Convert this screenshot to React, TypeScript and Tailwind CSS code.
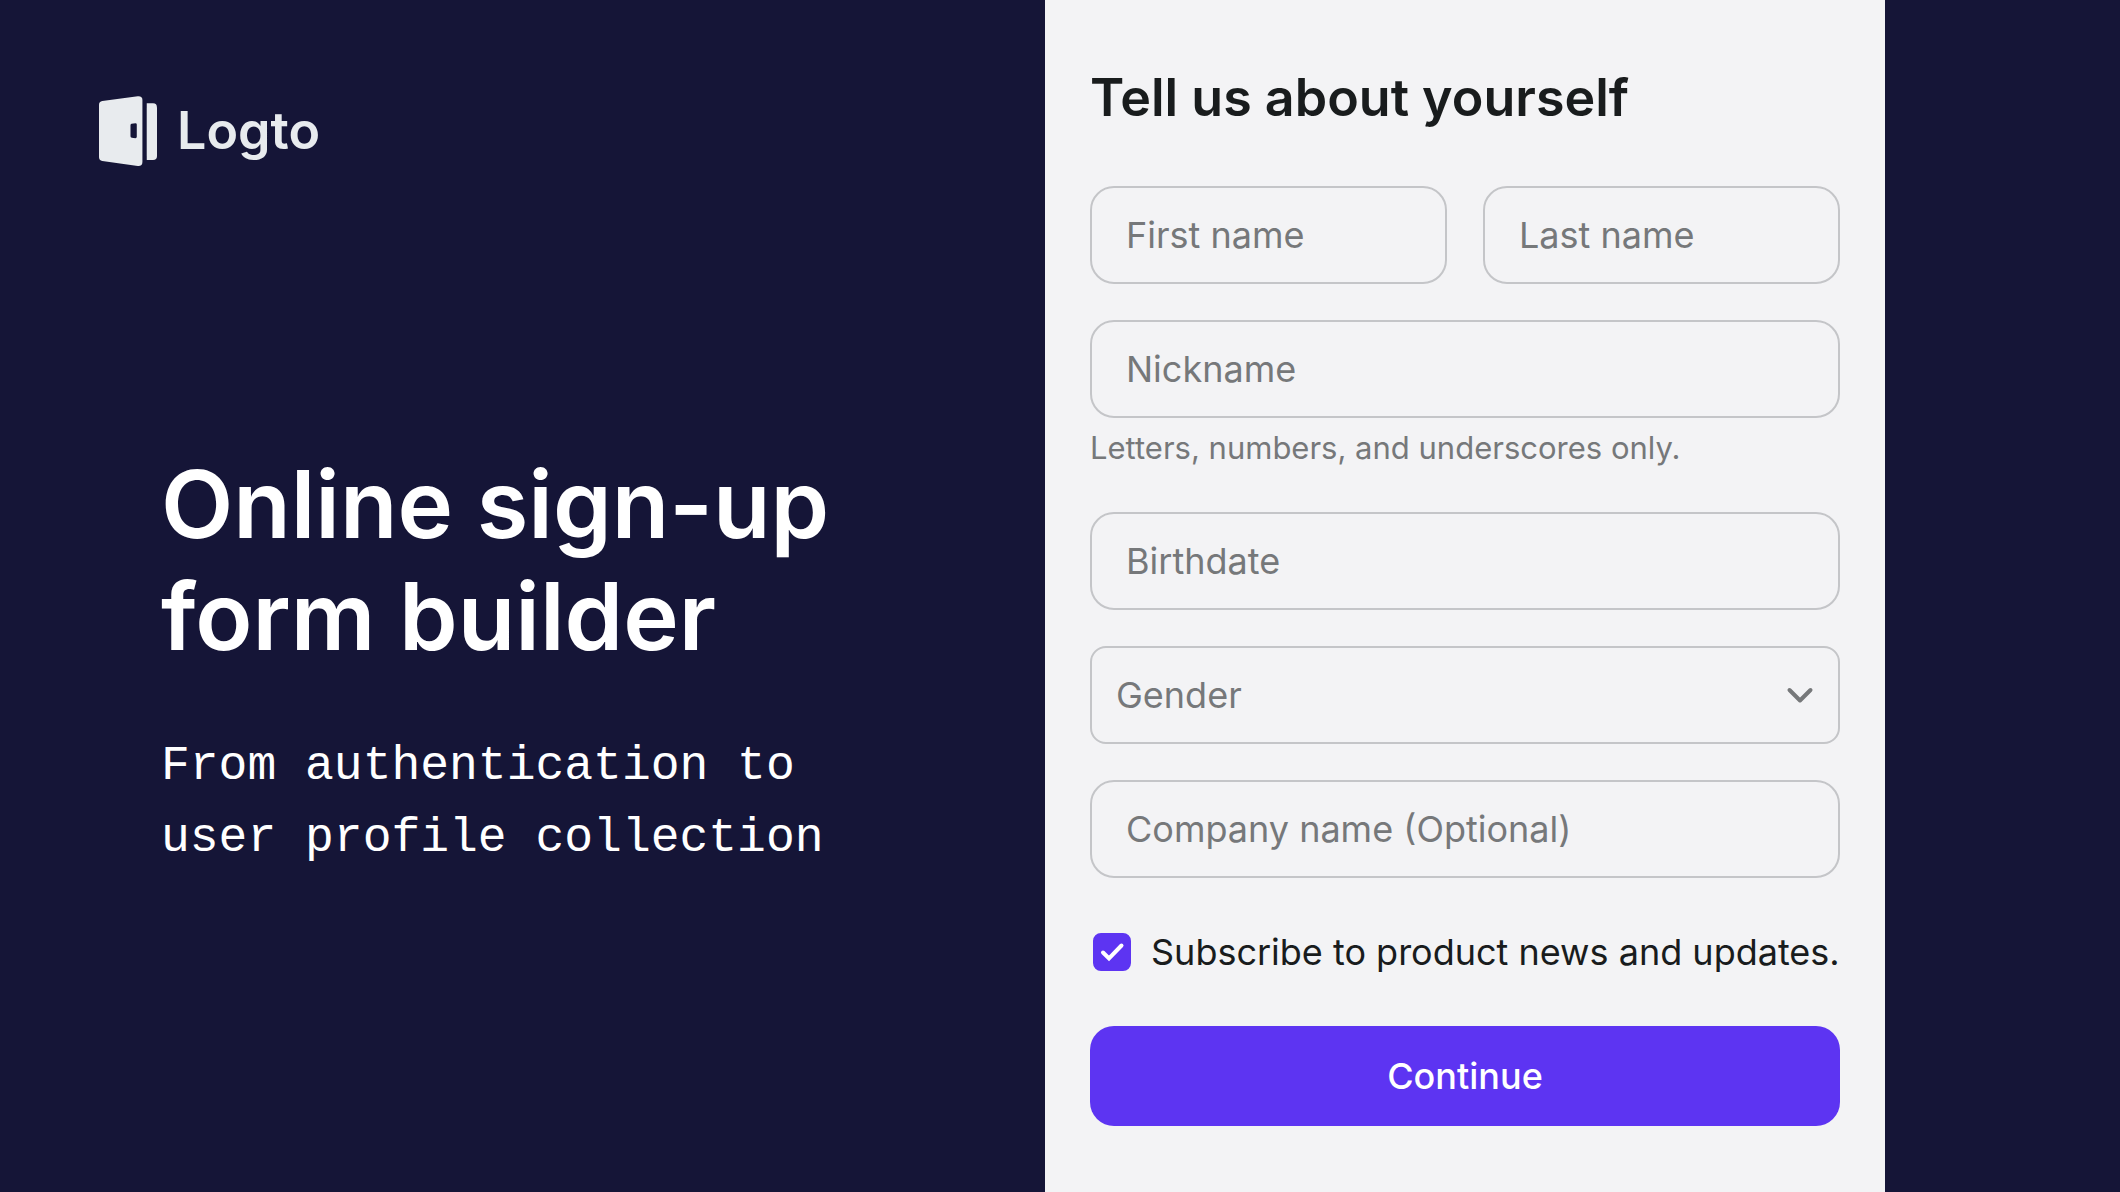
import { useState } from "react";

interface TextFieldProps {
  id: string;
  label: string;
  hint?: string;
}

const LogtoMark = () => (
  <svg
    viewBox="0 0 175 211"
    className="h-[70px] w-[58px] fill-[#e8ebee]"
    aria-hidden="true"
  >
    <path
      fillRule="evenodd"
      d="M10 15 L117 1 Q131 0 131 12 V199 Q131 212 117 211 L10 196 Q0 194 0 185 V26 Q0 17 10 15 Z M98 84 Q95 85 95 89 V121 Q95 125 99 126 L110 127 Q114 127 114 123 V86 Q114 82 110 82 Z"
    />
    <path d="M144 22 H163 Q175 22 175 35 V181 Q175 193 163 193 H144 Z" />
  </svg>
);

const TextField = ({ id, label, hint }: TextFieldProps) => {
  return (
    <div className="min-w-0">
      <input
        id={id}
        type="text"
        aria-label={label}
        aria-describedby={hint ? `${id}-hint` : undefined}
        placeholder={label}
        className="block h-[98px] w-full rounded-3xl border-2 border-[#c4c5c8] bg-transparent px-[34px] text-[36px] text-[#191c1d] placeholder:text-[#76787a] placeholder:opacity-100 focus:border-[#5d34f2] focus:outline-none"
      />
      {hint && (
        <p
          id={`${id}-hint`}
          className="pt-1.5 pb-1 text-[31px] leading-[48px] text-[#76787a]"
        >
          {hint}
        </p>
      )}
    </div>
  );
};

export default function App() {
  const [subscribed, setSubscribed] = useState(true);
  const [gender, setGender] = useState("");

  return (
    <div className="grid min-h-screen grid-cols-[1045fr_840fr_235fr] bg-[#151537] font-['Inter',sans-serif]">
      <section className="pt-24 pl-[99px]">
        <div className="flex items-center gap-5 text-[52px] leading-[70px] font-semibold text-[#e8ebee]">
          <LogtoMark />
          Logto
        </div>

        <div className="mt-[282px] pl-[62px] text-white">
          <h1 className="text-[94px] leading-[112px] font-semibold">
            Online sign-up
            <br />
            form builder
          </h1>
          <p className="mt-[58px] font-['Liberation_Mono',monospace] text-[48px] leading-[72px]">
            From authentication to
            <br />
            user profile collection
          </p>
        </div>
      </section>

      <main className="bg-[#f3f3f5] px-[45px] pt-[66px]">
        <h2 className="text-[52px] leading-[64px] font-semibold text-[#191c1d]">
          Tell us about yourself
        </h2>

        <form
          onSubmit={(e) => e.preventDefault()}
          className="mt-14 flex flex-col gap-9"
        >
          <div className="grid grid-cols-2 gap-9">
            <TextField id="first-name" label="First name" />
            <TextField id="last-name" label="Last name" />
          </div>
          <TextField
            id="nickname"
            label="Nickname"
            hint="Letters, numbers, and underscores only."
          />
          <TextField id="birthdate" label="Birthdate" />

          <div className="relative">
            <select
              id="gender"
              aria-label="Gender"
              value={gender}
              onChange={(e) => setGender(e.target.value)}
              className="block h-[98px] w-full appearance-none rounded-2xl border-2 border-[#c4c5c8] bg-transparent px-6 text-[36px] text-[#76787a] focus:border-[#5d34f2] focus:outline-none"
            >
              <option value="">Gender</option>
              <option value="female">Female</option>
              <option value="male">Male</option>
              <option value="other">Prefer not to say</option>
            </select>
            <svg
              viewBox="0 0 48 48"
              className="pointer-events-none absolute inset-y-0 right-4 my-auto size-12 fill-none stroke-[#76787a] stroke-4"
              strokeLinecap="round"
              strokeLinejoin="round"
              aria-hidden="true"
            >
              <path d="M13.5 19 L24 29.5 L34.5 19" />
            </svg>
          </div>

          <TextField id="company" label="Company name (Optional)" />

          <div className="mt-3.5 flex items-center gap-5 pl-[3px]">
            <span className="relative size-[38px] shrink-0">
              <input
                id="subscribe"
                type="checkbox"
                checked={subscribed}
                onChange={(e) => setSubscribed(e.target.checked)}
                className="block size-[38px] appearance-none rounded-lg border-2 border-[#c4c5c8] checked:border-[#5d34f2] checked:bg-[#5d34f2]"
              />
              {subscribed && (
                <svg
                  viewBox="0 0 38 38"
                  className="pointer-events-none absolute inset-0 fill-none stroke-white stroke-4"
                  strokeLinecap="round"
                  aria-hidden="true"
                >
                  <path d="M10 19.5 L16 25.5 L28.5 12.5" />
                </svg>
              )}
            </span>
            <label
              htmlFor="subscribe"
              className="text-[36px] leading-[48px] whitespace-nowrap text-[#191c1d]"
            >
              Subscribe to product news and updates.
            </label>
          </div>

          <button
            type="submit"
            className="mt-3.5 h-[100px] w-full cursor-pointer rounded-3xl bg-[#5d34f2] text-[36px] font-medium text-white"
          >
            Continue
          </button>
        </form>
      </main>
    </div>
  );
}
